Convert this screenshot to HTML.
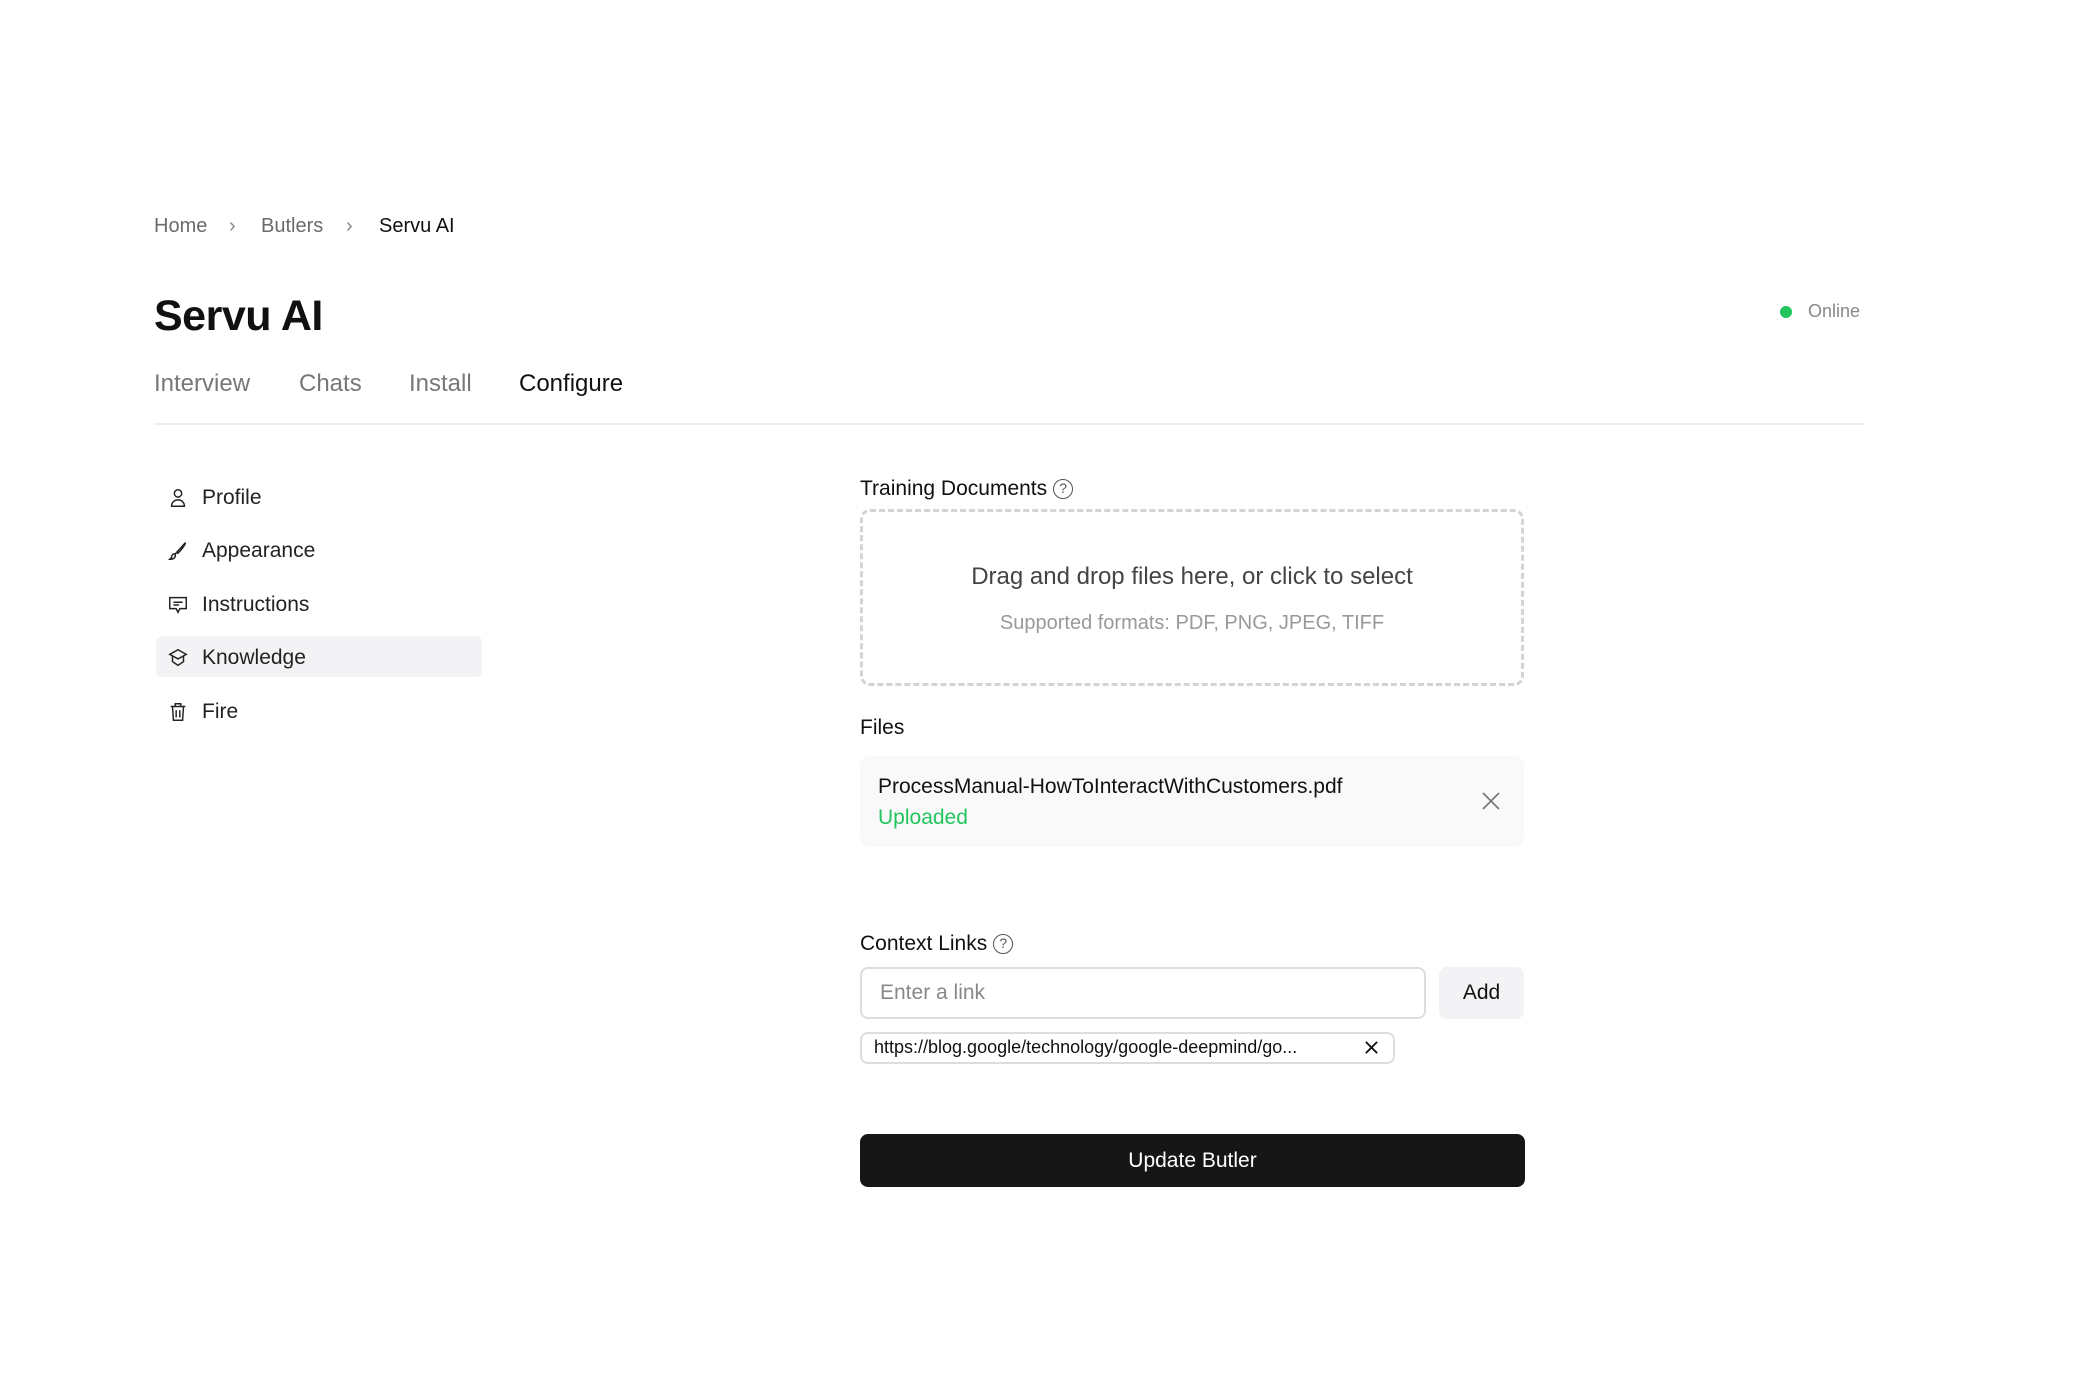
<!DOCTYPE html>
<html><head><meta charset="utf-8"><style>
*{box-sizing:border-box;margin:0;padding:0}
body{width:2087px;height:1395px;background:#fff;font-family:"Liberation Sans",sans-serif;color:#111;position:relative;overflow:hidden}
.a{position:absolute;white-space:nowrap}
.bc{font-size:20px;color:#6b6b6b;top:215px}
.tab{font-size:24px;color:#777;top:370px}
.side{font-size:21px;color:#222;left:202px}
.ic{position:absolute;left:167px;width:22px;height:22px}
.lbl{font-size:21px;color:#111}
.q{display:inline-block;width:20px;height:20px;border:1.5px solid #555;border-radius:50%;font-size:14px;text-align:center;line-height:17px;color:#555;vertical-align:2px;margin-left:6px}
</style></head><body>
<div class="a bc" style="left:154px">Home</div>
<div class="a bc" style="left:229px;color:#888">›</div>
<div class="a bc" style="left:261px">Butlers</div>
<div class="a bc" style="left:346px;color:#888">›</div>
<div class="a bc" style="left:379px;color:#111">Servu AI</div>
<div class="a" style="left:154px;top:292px;font-size:43px;font-weight:bold;letter-spacing:-0.5px">Servu AI</div>
<div class="a" style="left:1780px;top:306px;width:12px;height:12px;border-radius:50%;background:#22c55e"></div>
<div class="a" style="left:1808px;top:301px;font-size:18px;color:#888">Online</div>
<div class="a tab" style="left:154px">Interview</div>
<div class="a tab" style="left:299px">Chats</div>
<div class="a tab" style="left:409px">Install</div>
<div class="a tab" style="left:519px;color:#111">Configure</div>
<div class="a" style="left:154px;top:423px;width:1710px;height:2px;background:#eee"></div>

<div class="a" style="left:156px;top:636px;width:326px;height:41px;background:#f3f3f5;border-radius:6px"></div>
<svg class="ic" style="top:487px" viewBox="0 0 24 24" fill="none" stroke="#222" stroke-width="1.6"><circle cx="12" cy="7" r="4"/><path d="M5 21c0-4 3-7 7-7s7 3 7 7z"/></svg>
<div class="a side" style="top:486px">Profile</div>
<svg class="ic" style="top:540px" viewBox="0 0 24 24" fill="none" stroke="#222" stroke-width="1.6"><path d="M20 3L10 14l-1 1M20 3c1 1-6 10-9 12M9 15c-3 0-4 2-4 4l-2 2c3 0 6-1 6-4z"/></svg>
<div class="a side" style="top:539px">Appearance</div>
<svg class="ic" style="top:594px" viewBox="0 0 24 24" fill="none" stroke="#222" stroke-width="1.6"><path d="M3 4h18v12h-7l-2 4-2-4H3z"/><path d="M7 9h10M7 12h6"/></svg>
<div class="a side" style="top:593px">Instructions</div>
<svg class="ic" style="top:647px" viewBox="0 0 24 24" fill="none" stroke="#222" stroke-width="1.6"><path d="M12 3l9 5-9 5-9-5z"/><path d="M6 10v6l6 4 6-4v-6"/></svg>
<div class="a side" style="top:646px">Knowledge</div>
<svg class="ic" style="top:701px" viewBox="0 0 24 24" fill="none" stroke="#222" stroke-width="1.6"><path d="M4 6h16M9 6V3h6v3M6 6l1 15h10l1-15M10 10v8M14 10v8"/></svg>
<div class="a side" style="top:700px">Fire</div>

<div class="a lbl" style="left:860px;top:477px">Training Documents<span class="q">?</span></div>
<div class="a" style="left:860px;top:509px;width:664px;height:177px;border:3px dashed #d4d4d8;border-radius:10px"></div>
<div class="a" style="left:860px;top:563px;width:664px;text-align:center;font-size:24px;color:#444">Drag and drop files here, or click to select</div>
<div class="a" style="left:860px;top:612px;width:664px;text-align:center;font-size:20px;color:#999">Supported formats: PDF, PNG, JPEG, TIFF</div>
<div class="a lbl" style="left:860px;top:716px">Files</div>
<div class="a" style="left:860px;top:756px;width:664px;height:91px;background:#f8f9f8;border-radius:10px"></div>
<div class="a" style="left:878px;top:775px;font-size:21px;color:#111">ProcessManual-HowToInteractWithCustomers.pdf</div>
<div class="a" style="left:878px;top:806px;font-size:21px;color:#22c55e">Uploaded</div>
<svg class="a" style="left:1481px;top:791px" width="20" height="20" viewBox="0 0 20 20" stroke="#777" stroke-width="1.6"><path d="M2 2l16 16M18 2L2 18"/></svg>

<div class="a lbl" style="left:860px;top:932px">Context Links<span class="q">?</span></div>
<div class="a" style="left:860px;top:967px;width:566px;height:52px;border:2px solid #ddd;border-radius:8px"></div>
<div class="a" style="left:880px;top:981px;font-size:21px;color:#888">Enter a link</div>
<div class="a" style="left:1439px;top:967px;width:85px;height:52px;background:#f3f3f5;border-radius:8px;text-align:center;line-height:52px;font-size:21px;color:#111">Add</div>
<div class="a" style="left:860px;top:1032px;width:535px;height:32px;border:2px solid #ddd;border-radius:8px"></div>
<div class="a" style="left:874px;top:1037px;font-size:18px;color:#111">https://blog.google/technology/google-deepmind/go...</div>
<svg class="a" style="left:1364px;top:1040px" width="15" height="15" viewBox="0 0 16 16" stroke="#111" stroke-width="2"><path d="M2 2l12 12M14 2L2 14"/></svg>
<div class="a" style="left:860px;top:1134px;width:665px;height:53px;background:#161616;border-radius:8px;color:#fff;text-align:center;line-height:53px;font-size:21px">Update Butler</div>
</body></html>
